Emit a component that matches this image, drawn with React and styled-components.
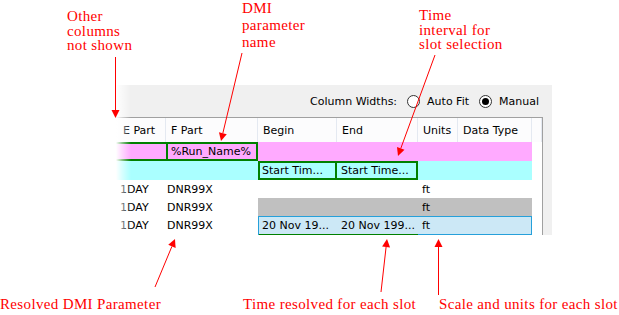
import React from 'react';
import styled, { createGlobalStyle } from 'styled-components';

const Global = createGlobalStyle`
  html, body { margin: 0; padding: 0; background: #fff; }
  body { font-family: "DejaVu Sans", "Liberation Sans", sans-serif; }
`;

const Page = styled.div`
  position: relative;
  width: 619px;
  height: 315px;
  overflow: hidden;
  background: #fff;
  box-sizing: border-box;
  padding: 85px 0 0 112px;
  display: flex;
  flex-direction: column;
`;

const Panel = styled.div`
  position: relative;
  width: 440px;
  height: 150px;
  background: #f0f0f0;
  display: flex;
  flex-direction: column;
`;

const Fade = styled.div`
  position: absolute;
  left: 0;
  top: 0;
  bottom: 0;
  width: 20px;
  background: linear-gradient(to right, #fff 0px, #fff 4px, rgba(255,255,255,0.55) 10px, rgba(255,255,255,0) 19px);
  pointer-events: none;
`;

const Toolbar = styled.div`
  height: 32px;
  display: flex;
  align-items: center;
  justify-content: flex-end;
  padding-right: 13px;
  font-size: 11px;
  line-height: 13px;
  color: #000;
`;

const ToolLabel = styled.span`
  margin-right: 10px;
`;

const Option = styled.label`
  display: flex;
  align-items: center;
  gap: 7px;
  & + & { margin-left: 10px; }
`;

const Radio = styled.span`
  width: 13px;
  height: 13px;
  box-sizing: border-box;
  border-radius: 50%;
  border: 1px solid #333;
  background: #fff;
  display: flex;
  align-items: center;
  justify-content: center;
  &::after {
    content: '';
    width: 7px;
    height: 7px;
    border-radius: 50%;
    background: ${p => (p.$on ? '#000' : 'transparent')};
  }
`;

const Grid = styled.div`
  margin-right: 9px;
  flex: 1;
  background: #fff;
  border-top: 1px solid #a0a0a0;
  border-right: 1px solid #a0a0a0;
  display: flex;
  flex-direction: column;
  font-size: 11px;
  line-height: 13px;
  color: #000;
`;

const COLS = '54px 92px 79px 81px 40px 74px 10px';

const Row = styled.div`
  display: grid;
  grid-template-columns: ${COLS};
  height: ${p => p.$h}px;
`;

const HeadRow = styled(Row)`
  background: #fcfcfd;
`;

const HeadCell = styled.div`
  display: flex;
  align-items: center;
  padding-left: ${p => p.$pad ?? 5}px;
  border-right: 1px solid #e4e9f1;
  white-space: nowrap;
  overflow: hidden;
`;

const GREEN = '#008000';
const BLUE = '#26a0da';
const FRAMES = {
  none: 'none',
  all: `inset 0 0 0 2px ${GREEN}`,
  noRight: `inset 2px 0 0 ${GREEN}, inset 0 2px 0 ${GREEN}, inset 0 -2px 0 ${GREEN}`,
  noLeft: `inset -2px 0 0 ${GREEN}, inset 0 2px 0 ${GREEN}, inset 0 -2px 0 ${GREEN}`,
  selFirst: `inset 1px 0 0 ${BLUE}, inset 0 1px 0 ${BLUE}, inset 0 -1px 0 ${GREEN}`,
  selTime: `inset 0 1px 0 ${BLUE}, inset 0 -1px 0 ${GREEN}`,
  selMid: `inset 0 1px 0 ${BLUE}, inset 0 -1px 0 ${BLUE}`,
  selLast: `inset -1px 0 0 ${BLUE}, inset 0 1px 0 ${BLUE}, inset 0 -1px 0 ${BLUE}`,
};

const BG = {
  none: 'transparent',
  pink: '#ffaaff',
  cyan: '#aaffff',
  gray: '#c0c0c0',
  sel: '#cce8f6',
};

const Cell = styled.div`
  display: flex;
  align-items: center;
  padding-left: ${p => p.$pad ?? 4}px;
  background: ${p => BG[p.$bg || 'none']};
  box-shadow: ${p => FRAMES[p.$frame || 'none']};
  white-space: nowrap;
  overflow: hidden;
`;

const Note = styled.div`
  position: absolute;
  left: ${p => p.$x}px;
  top: ${p => p.$y}px;
  font-family: "Liberation Serif", "Times New Roman", Times, "DejaVu Serif", serif;
  font-size: 15px;
  line-height: ${p => p.$lh || 15}px;
  letter-spacing: 0.35px;
  color: #ff0000;
  white-space: nowrap;
`;

const Overlay = styled.svg`
  position: absolute;
  left: 0;
  top: 0;
  pointer-events: none;
`;

function Arrow({ x1, y1, x2, y2 }) {
  const dx = x2 - x1;
  const dy = y2 - y1;
  const len = Math.hypot(dx, dy);
  const ux = dx / len;
  const uy = dy / len;
  const L = 8;
  const W = 4;
  const bx = x2 - ux * L;
  const by = y2 - uy * L;
  const px = -uy * W;
  const py = ux * W;
  return (
    <g>
      <line x1={x1} y1={y1} x2={bx} y2={by} stroke="#ff0000" strokeWidth="1" />
      <polygon
        points={`${x2},${y2} ${bx + px},${by + py} ${bx - px},${by - py}`}
        fill="#ff0000"
      />
    </g>
  );
}

const ARROWS = [
  { x1: 115.5, y1: 57, x2: 115.5, y2: 118 },
  { x1: 242, y1: 53, x2: 221, y2: 141 },
  { x1: 435, y1: 55, x2: 398, y2: 156 },
  { x1: 155, y1: 287, x2: 175, y2: 239 },
  { x1: 381, y1: 292, x2: 387, y2: 239 },
  { x1: 438.5, y1: 295, x2: 438.5, y2: 239 },
];

const HEADERS = [
  { t: 'E Part', pad: 11 },
  { t: 'F Part' },
  { t: 'Begin' },
  { t: 'End' },
  { t: 'Units' },
  { t: 'Data Type' },
  { t: '' },
];

export default function App() {
  return (
    <>
      <Global />
      <Page>
        <Panel>
          <Toolbar>
            <ToolLabel>Column Widths:</ToolLabel>
            <Option>
              <Radio />
              <span>Auto Fit</span>
            </Option>
            <Option>
              <Radio $on />
              <span>Manual</span>
            </Option>
          </Toolbar>
          <Grid>
            <HeadRow $h={24}>
              {HEADERS.map((h, i) => (
                <HeadCell key={i} $pad={h.pad}>{h.t}</HeadCell>
              ))}
            </HeadRow>
            <Row $h={19}>
              <Cell $bg="pink" $frame="noRight" />
              <Cell $bg="pink" $frame="all" $pad={5}>%Run_Name%</Cell>
              <Cell $bg="pink" />
              <Cell $bg="pink" />
              <Cell $bg="pink" />
              <Cell $bg="pink" />
              <Cell />
            </Row>
            <Row $h={19}>
              <Cell $bg="cyan" />
              <Cell $bg="cyan" />
              <Cell $bg="cyan" $frame="all">Start Tim...</Cell>
              <Cell $bg="cyan" $frame="noLeft">Start Time...</Cell>
              <Cell $bg="cyan" />
              <Cell $bg="cyan" />
              <Cell />
            </Row>
            <Row $h={18}>
              <Cell $pad={8}>1DAY</Cell>
              <Cell $pad={1}>DNR99X</Cell>
              <Cell />
              <Cell />
              <Cell>ft</Cell>
              <Cell />
              <Cell />
            </Row>
            <Row $h={18}>
              <Cell $pad={8}>1DAY</Cell>
              <Cell $pad={1}>DNR99X</Cell>
              <Cell $bg="gray" />
              <Cell $bg="gray" />
              <Cell $bg="gray">ft</Cell>
              <Cell $bg="gray" />
              <Cell />
            </Row>
            <Row $h={19}>
              <Cell $pad={8}>1DAY</Cell>
              <Cell $pad={1}>DNR99X</Cell>
              <Cell $bg="sel" $frame="selFirst">20 Nov 19...</Cell>
              <Cell $bg="sel" $frame="selTime">20 Nov 199...</Cell>
              <Cell $bg="sel" $frame="selMid">ft</Cell>
              <Cell $bg="sel" $frame="selLast" />
              <Cell />
            </Row>
          </Grid>
          <Fade />
        </Panel>

        <Note $x={67} $y={9} $lh={14.5}>Other<br />columns<br />not shown</Note>
        <Note $x={242} $y={0} $lh={17}>DMI<br />parameter<br />name</Note>
        <Note $x={419} $y={8} $lh={14.5}>Time<br />interval for<br />slot selection</Note>
        <Note $x={0} $y={297}>Resolved DMI Parameter</Note>
        <Note $x={243} $y={297}>Time resolved for each slot</Note>
        <Note $x={439} $y={297}>Scale and units for each slot</Note>

        <Overlay width="619" height="315" viewBox="0 0 619 315">
          {ARROWS.map((a, i) => (
            <Arrow key={i} {...a} />
          ))}
        </Overlay>
      </Page>
    </>
  );
}
